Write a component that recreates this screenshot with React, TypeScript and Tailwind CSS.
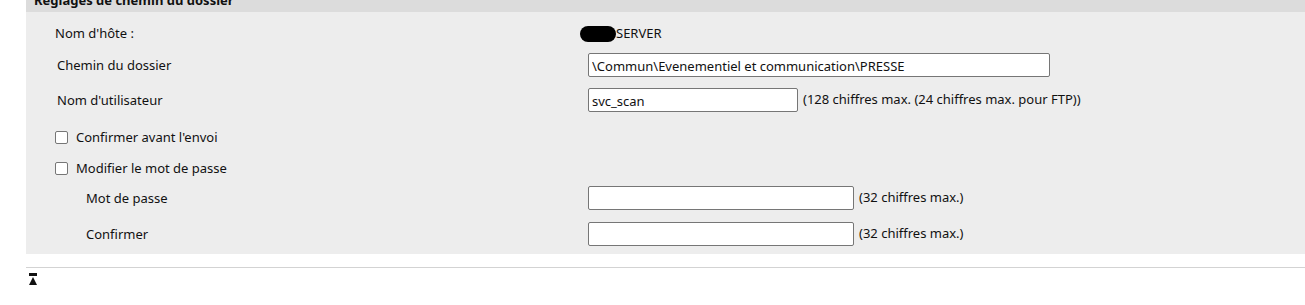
// Réglages de chemin du dossier — panneau de formulaire (hôte, chemin, identifiants).
const font = { fontFamily: '"Noto Sans", "Open Sans", sans-serif' };

function Field({ w, value = '' }: { w: string; value?: string }) {
  return (
    <input
      type="text"
      defaultValue={value}
      className={`h-[24px] ${w} rounded-[2px] border border-[#767676] bg-white px-[3px] pt-[1px] text-[13px] text-[#111] outline-none`}
      style={font}
    />
  );
}

function Check({ label }: { label: string }) {
  return (
    <label className="flex h-[24px] items-center gap-[8px] pl-[29px]">
      <span className="block h-[13px] w-[13px] rounded-[2px] border border-[#767676] bg-white" />
      <span className="pt-[1px]">{label}</span>
    </label>
  );
}

export default function App() {
  return (
    <div className="h-[305px] w-[1305px] overflow-hidden bg-white text-[13px] text-[#111]" style={font}>
      <div className="ml-[26px]">
        {/* en-tête coupé en haut, comme dans la capture */}
        <div className="h-[12px] overflow-hidden bg-[#dcdcdc] pl-[8px]">
          <div className="mt-[-8px] text-[13px] font-bold leading-[16px]">Réglages de chemin du dossier</div>
        </div>

        <div className="bg-[#ededed] pb-[8px] pt-[10px]">
          <div className="flex h-[22px] items-center pt-[1px]">
            <span className="w-[554px] pl-[29px]">Nom d'hôte :</span>
            <span className="block h-[16px] w-[36px] rounded-full bg-black" />
            <span>SERVER</span>
          </div>

          <div className="mt-[9px] flex h-[24px] items-center">
            <span className="w-[562px] pl-[31px] pt-[1px]">Chemin du dossier</span>
            <Field w="w-[462px]" value="\Commun\Evenementiel et communication\PRESSE" />
          </div>

          <div className="mt-[11px] flex h-[24px] items-center">
            <span className="w-[562px] pl-[31px] pt-[1px]">Nom d'utilisateur</span>
            <Field w="w-[210px]" value="svc_scan" />
            <span className="ml-[5px]">(128 chiffres max. (24 chiffres max. pour FTP))</span>
          </div>

          <div className="mt-[13px]">
            <Check label="Confirmer avant l'envoi" />
          </div>
          <div className="mt-[7px]">
            <Check label="Modifier le mot de passe" />
          </div>

          <div className="mt-[6px] flex h-[24px] items-center">
            <span className="w-[562px] pl-[60px] pt-[1px]">Mot de passe</span>
            <Field w="w-[266px]" />
            <span className="ml-[5px]">(32 chiffres max.)</span>
          </div>

          <div className="mt-[12px] flex h-[24px] items-center">
            <span className="w-[562px] pl-[60px] pt-[1px]">Confirmer</span>
            <Field w="w-[266px]" />
            <span className="ml-[5px]">(32 chiffres max.)</span>
          </div>
        </div>

        <div className="mt-[13px] h-px bg-[#d3d3d3]" />

        <a href="#" className="ml-[3px] mt-[5px] block w-[8px]" aria-label="Haut de page">
          <svg viewBox="0 0 8 12" width="8" height="12" aria-hidden="true">
            <rect x="0" y="0" width="8" height="3" fill="#111" />
            <polygon points="4,4 0,12 8,12" fill="#111" />
          </svg>
        </a>
      </div>
    </div>
  );
}
